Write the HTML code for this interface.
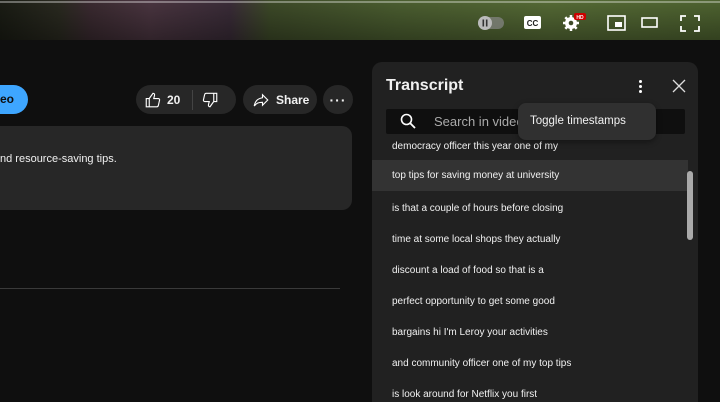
<!DOCTYPE html>
<html style="width:720px;height:402px;overflow:hidden"><head><meta charset="utf-8"><style>
*{margin:0;padding:0;box-sizing:border-box}
body{width:720px;height:402px;background:#0f0f0f;overflow:hidden;position:relative;font-family:"Liberation Sans",sans-serif;color:#f1f1f1}
.abs{position:absolute}
.video{left:0;top:0;width:720px;height:40px;background:
linear-gradient(90deg,#1a1c14 0px,#2a2a20 60px,#3a2a30 90px,#4a3540 150px,#3a2c38 230px,#3d4a28 270px,#4b5e30 400px,#556a35 550px,#4e6330 720px)}
.video:after{content:"";position:absolute;left:0;top:0;width:720px;height:40px;background:linear-gradient(180deg,rgba(0,0,0,0) 0,rgba(0,0,0,.35) 100%)}
.prog{left:0;top:1px;width:720px;height:2px;background:rgba(255,255,255,.35)}
.pill{background:#272727;border-radius:18px;height:29px;top:85px;font-size:12px;font-weight:bold;display:flex;align-items:center}
.desc{left:-20px;top:126px;width:372px;height:84px;background:#272727;border-radius:10px;font-size:11px}
.panel{left:372px;top:62px;width:326px;height:340px;background:#212121;border-radius:10px 10px 0 0}
.row{position:absolute;left:0;width:316px;height:31px;font-size:10px;padding-left:20px;line-height:31px;color:#f1f1f1}
</style></head><body>
<div class="abs video"></div>
<div class="abs prog"></div>
<svg class="abs" style="left:476px;top:12px" width="240" height="24" viewBox="0 0 240 24">
 <rect x="2" y="5" width="26" height="12" rx="6" fill="#888" opacity=".7"/>
 <circle cx="9" cy="11" r="7" fill="#bbb"/>
 <rect x="6.5" y="7.5" width="1.6" height="7" fill="#333"/><rect x="9.9" y="7.5" width="1.6" height="7" fill="#333"/>
 <rect x="48" y="4" width="17" height="13" rx="2" fill="#fff"/>
 <text x="56.5" y="14" font-size="8" font-weight="bold" text-anchor="middle" fill="#222" font-family="Liberation Sans">CC</text>
 <g stroke="#fff" stroke-width="2.5"><line x1="95" y1="3" x2="95" y2="19"/><line x1="87" y1="11" x2="103" y2="11"/><line x1="89.3" y1="5.3" x2="100.7" y2="16.7"/><line x1="100.7" y1="5.3" x2="89.3" y2="16.7"/></g>
 <circle cx="95" cy="11" r="6" fill="#fff"/><circle cx="95" cy="11" r="2.3" fill="#3d4a28"/>
 <rect x="98" y="1" width="12" height="7" rx="2" fill="#c00"/><text x="104" y="7" font-size="5" font-weight="bold" text-anchor="middle" fill="#fff" font-family="Liberation Sans">HD</text>
 <rect x="132" y="4" width="17" height="14" fill="none" stroke="#fff" stroke-width="1.6"/><rect x="139" y="10" width="7" height="5" fill="#fff"/>
 <rect x="166" y="6" width="15" height="9" fill="none" stroke="#fff" stroke-width="1.6"/>
 <path d="M205 9V4h5M218 4h5v5M223 14v5h-5M210 19h-5v-5" fill="none" stroke="#fff" stroke-width="1.8"/>
</svg>
<div class="abs" style="left:-20px;top:85px;width:48px;height:29px;background:#3ea6ff;border-radius:15px;color:#0f0f0f;font-size:12px;font-weight:bold;line-height:29px;padding-left:20px">eo</div>
<div class="abs pill" style="left:136px;width:100px">
 <svg style="margin-left:8px" width="18" height="18" viewBox="0 0 24 24"><path d="M3 10h4v11H3zM7 10l5-7c1.5 0 2.5 1 2 3l-1 4h6c1.2 0 2 1 1.8 2l-1.6 7c-.2 1-1 2-2 2H7" fill="none" stroke="#fff" stroke-width="1.5"/></svg>
 <span style="margin-left:5px">20</span>
 <span style="width:1px;height:20px;background:#444;margin-left:12px"></span>
 <svg style="margin-left:8px" width="18" height="18" viewBox="0 0 24 24"><path d="M21 14h-4V3h4zM17 14l-5 7c-1.5 0-2.5-1-2-3l1-4H5c-1.2 0-2-1-1.8-2l1.6-7c.2-1 1-2 2-2H17" fill="none" stroke="#fff" stroke-width="1.5"/></svg>
</div>
<div class="abs pill" style="left:243px;width:74px">
 <svg style="margin-left:9px" width="18" height="18" viewBox="0 0 24 24"><path d="M14 5l7 7-7 7v-4c-5 0-8 1-11 5 1-6 4-10 11-11z" fill="none" stroke="#fff" stroke-width="1.5"/></svg>
 <span style="margin-left:6px">Share</span>
</div>
<div class="abs pill" style="left:323px;width:30px;justify-content:center;font-size:14px;letter-spacing:1px">···</div>
<div class="abs desc"><div style="position:absolute;left:20px;top:27px">nd resource-saving tips.</div></div>
<div class="abs" style="left:0;top:288px;width:340px;height:1px;background:#3a3a3a"></div>
<div class="abs panel">
 <div class="abs" style="left:14px;top:15px;font-size:16px;font-weight:bold">Transcript</div>
 <div class="abs" style="left:267px;top:18px;width:3px">
  <div style="width:3px;height:3px;border-radius:2px;background:#fff;margin-bottom:2px"></div><div style="width:3px;height:3px;border-radius:2px;background:#fff;margin-bottom:2px"></div><div style="width:3px;height:3px;border-radius:2px;background:#fff"></div>
 </div>
 <svg class="abs" style="left:300px;top:17px" width="14" height="14" viewBox="0 0 14 14"><path d="M1 1L13 13M13 1L1 13" stroke="#ddd" stroke-width="1.3"/></svg>
 <div class="abs" style="left:14px;top:47px;width:299px;height:25px;background:#0f0f0f;border-radius:2px"></div>
 <svg class="abs" style="left:28px;top:51px" width="16" height="16" viewBox="0 0 16 16"><circle cx="6.5" cy="6.5" r="5" fill="none" stroke="#fff" stroke-width="1.6"/><path d="M10 10l5 5" stroke="#fff" stroke-width="1.8"/></svg>
 <div class="abs" style="left:62px;top:52px;font-size:13px;color:#aaa">Search in video</div>
 <div class="abs" style="left:0;top:76px;width:326px;height:270px;overflow:hidden">
  <div class="row" style="top:-7px">democracy officer this year one of my</div>
  <div class="row" style="top:22px;background:#333">top tips for saving money at university</div>
  <div class="row" style="top:55px">is that a couple of hours before closing</div>
  <div class="row" style="top:86px">time at some local shops they actually</div>
  <div class="row" style="top:117px">discount a load of food so that is a</div>
  <div class="row" style="top:148px">perfect opportunity to get some good</div>
  <div class="row" style="top:179px">bargains hi I'm Leroy your activities</div>
  <div class="row" style="top:210px">and community officer one of my top tips</div>
  <div class="row" style="top:241px">is look around for Netflix you first</div>
 </div>
 <div class="abs" style="left:315px;top:109px;width:6px;height:69px;border-radius:3px;background:#aaa"></div>
</div>
<div class="abs" style="left:518px;top:103px;width:138px;height:37px;background:#303030;border-radius:8px;font-size:11.5px;line-height:37px;padding-left:12px;box-shadow:0 2px 6px rgba(0,0,0,.4)">Toggle timestamps</div>
</body></html>
